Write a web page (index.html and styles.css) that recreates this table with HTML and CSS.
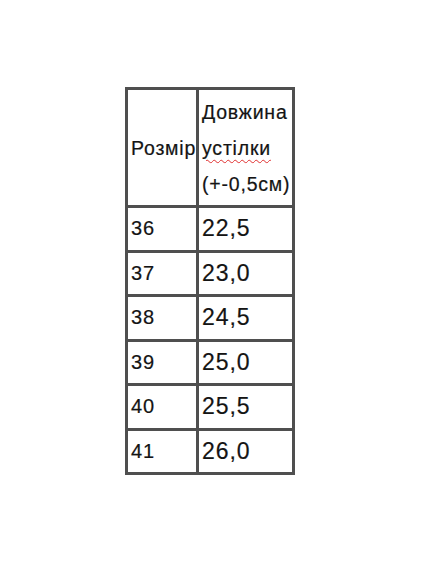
FILE: index.html
```html
<!DOCTYPE html>
<html lang="uk">
<head>
<meta charset="utf-8">
<title>Розмір</title>
<link rel="stylesheet" href="styles.css">
</head>
<body>
<div class="page">
  <table class="sizes">
    <tr class="head">
      <td class="c1">Розмір</td>
      <td class="c2">Довжина<br><span class="spell">устілки</span><br>(+-0,5см)</td>
    </tr>
    <tr><td class="c1">36</td><td class="c2">22,5</td></tr>
    <tr><td class="c1">37</td><td class="c2">23,0</td></tr>
    <tr><td class="c1">38</td><td class="c2">24,5</td></tr>
    <tr><td class="c1">39</td><td class="c2">25,0</td></tr>
    <tr><td class="c1">40</td><td class="c2">25,5</td></tr>
    <tr><td class="c1">41</td><td class="c2">26,0</td></tr>
  </table>
</div>
</body>
</html>
```
FILE: styles.css
```css
html, body {
  margin: 0;
  padding: 0;
  background: #ffffff;
}
.page {
  padding: 87px 0 0 125px;
  font-family: "Liberation Sans", Arial, sans-serif;
  color: #141414;
}
.sizes {
  border-collapse: collapse;
  border: 3px solid #4f4f4f;
  table-layout: fixed;
  width: 170px;
}
.sizes td {
  border: 3px solid #4f4f4f;
  padding: 0 0 0 3px;
  vertical-align: middle;
  text-align: left;
  white-space: nowrap;
  overflow: visible;
  -webkit-text-stroke: 0.2px #141414;
}
.sizes .c1 {
  width: 65px;
  font-size: 20px;
  letter-spacing: 0.8px;
}
.sizes .c2 {
  font-size: 23px;
  letter-spacing: 0.9px;
}
.sizes tr {
  height: 44.5px;
}
.sizes .head {
  height: 118px;
}
.sizes .head td {
  font-size: 19.5px;
  line-height: 36px;
  letter-spacing: 0.8px;
}
.spell {
  text-decoration: underline wavy #e03030;
  text-decoration-thickness: 1px;
  text-underline-offset: 4px;
}
```
